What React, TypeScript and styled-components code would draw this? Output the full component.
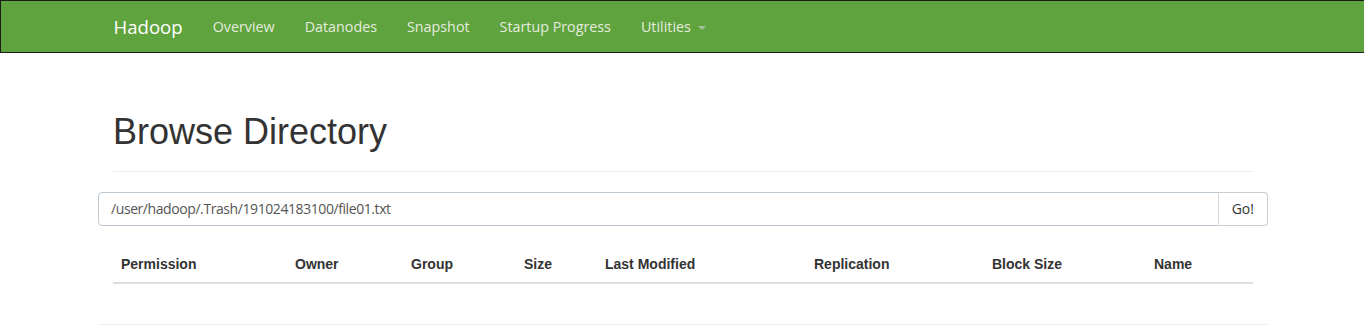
import React from 'react';
import styled, { createGlobalStyle } from 'styled-components';

const GlobalStyle = createGlobalStyle`
  body {
    margin: 0;
    background: #fff;
    color: #333;
    font-family: 'Liberation Sans', Arial, sans-serif;
    font-size: 14px;
    line-height: 20px;
  }
  * {
    box-sizing: border-box;
  }
`;

const Navbar = styled.nav`
  height: 53px;
  background-color: #5fa33e;
  border: 1px solid #1b1b1b;
  border-right: none;
`;

const NavContainer = styled.div`
  width: 1170px;
  margin-left: calc((100% - 1168px) / 2);
  padding: 0 15px;
  display: flex;
  align-items: center;
`;

const Brand = styled.a`
  margin-left: -15px;
  padding: 15px;
  font-family: 'Open Sans', sans-serif;
  font-size: 18.6px;
  line-height: 21px;
  color: #fff;
  text-decoration: none;
`;

const NavList = styled.ul`
  display: flex;
  list-style: none;
  margin: 0;
  padding: 0;
`;

const NavLink = styled.a`
  display: flex;
  align-items: center;
  padding: 15px;
  font-family: 'Open Sans', sans-serif;
  font-size: 14.3px;
  line-height: 21px;
  color: #e4ecdf;
  text-decoration: none;
`;

const Caret = styled.span`
  display: inline-block;
  margin-left: 7px;
  margin-top: 2px;
  border-top: 4px solid #a9bda0;
  border-left: 4px solid transparent;
  border-right: 4px solid transparent;
`;

const Container = styled.div`
  width: 1170px;
  margin-left: calc((100% - 1168px) / 2);
  padding: 19px 15px 0;
`;

const PageHeader = styled.div`
  margin: 40px 0 20px;
  padding-bottom: 9px;
  border-bottom: 1px solid #eee;
`;

const Title = styled.h1`
  margin: 0 0 10px;
  font-size: 36px;
  font-weight: 500;
  line-height: 1.1;
  color: #333;
`;

const Row = styled.div`
  margin: 0 -15px;
`;

const InputGroup = styled.form`
  display: flex;
  height: 34px;
`;

const PathInput = styled.input`
  flex: 1;
  height: 34px;
  padding: 6px 12px;
  border: 1px solid #bdc8d3;
  border-radius: 4px 0 0 4px;
  font-family: 'Open Sans', sans-serif;
  font-size: 14px;
  letter-spacing: -0.42px;
  color: #555;
  outline: none;
`;

const GoButton = styled.button`
  height: 34px;
  padding: 6px 13px;
  margin-left: -1px;
  border: 1px solid #ccc;
  border-left-color: #d9d9d9;
  border-radius: 0 4px 4px 0;
  background: #fff;
  font-family: 'Open Sans', sans-serif;
  font-size: 14px;
  color: #333;
`;

const Table = styled.table`
  width: 100%;
  margin-top: 20px;
  border-collapse: collapse;
`;

const Th = styled.th<{ $w: number }>`
  width: ${(p) => p.$w}px;
  padding: 8px;
  text-align: left;
  font-weight: bold;
  line-height: 20px;
  border-bottom: 2px solid #ddd;
`;

const Rule = styled.hr`
  margin: 40px 0 0;
  border: 0;
  border-top: 1px solid #eee;
`;

const navItems = ['Overview', 'Datanodes', 'Snapshot', 'Startup Progress'];

const columns = [
  { name: 'Permission', w: 174 },
  { name: 'Owner', w: 116 },
  { name: 'Group', w: 113 },
  { name: 'Size', w: 81 },
  { name: 'Last Modified', w: 209 },
  { name: 'Replication', w: 178 },
  { name: 'Block Size', w: 162 },
  { name: 'Name', w: 107 },
];

const App = () => {
  return (
    <>
      <GlobalStyle />
      <Navbar>
        <NavContainer>
          <Brand href='#'>Hadoop</Brand>
          <NavList>
            {navItems.map((item) => (
              <li key={item}>
                <NavLink href='#'>{item}</NavLink>
              </li>
            ))}
            <li>
              <NavLink href='#'>
                Utilities
                <Caret />
              </NavLink>
            </li>
          </NavList>
        </NavContainer>
      </Navbar>
      <Container>
        <PageHeader>
          <Title>Browse Directory</Title>
        </PageHeader>
        <Row>
          <InputGroup onSubmit={(e) => e.preventDefault()}>
            <PathInput
              defaultValue='/user/hadoop/.Trash/191024183100/file01.txt'
            />
            <GoButton type='submit'>Go!</GoButton>
          </InputGroup>
        </Row>
        <Table>
          <thead>
            <tr>
              {columns.map((col) => (
                <Th key={col.name} $w={col.w}>
                  {col.name}
                </Th>
              ))}
            </tr>
          </thead>
          <tbody />
        </Table>
        <Row>
          <Rule />
        </Row>
      </Container>
    </>
  );
};

export default App;
